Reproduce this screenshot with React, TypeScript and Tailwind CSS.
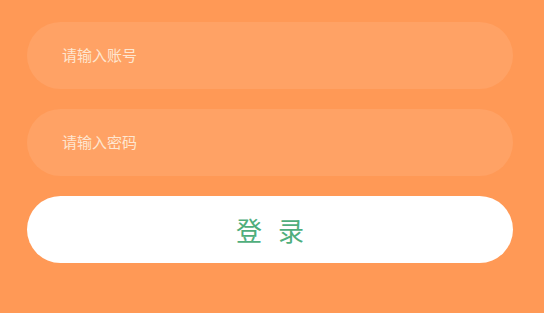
import React from "react";

export default function App() {
  return (
    <div
      className="w-[544px] h-[313px] bg-[#ff9956] pt-[22px] pl-[27px] pr-[31px] flex flex-col gap-[20px]"
      style={{ fontFamily: '"Noto Sans CJK SC", "Noto Sans", sans-serif' }}
    >
      <div className="h-[67px] rounded-full bg-[#ffa265] flex items-center pl-[35px] pb-[1px] text-[15px] text-[#fee6d0]">
        请输入账号
      </div>
      <div className="h-[67px] rounded-full bg-[#ffa265] flex items-center pl-[35px] pb-[1px] text-[15px] text-[#fee6d0]">
        请输入密码
      </div>
      <div className="h-[67px] rounded-full bg-white flex items-center justify-center gap-[16px] text-[26px] text-[#4fae7c]">
        <span>登</span>
        <span>录</span>
      </div>
    </div>
  );
}
